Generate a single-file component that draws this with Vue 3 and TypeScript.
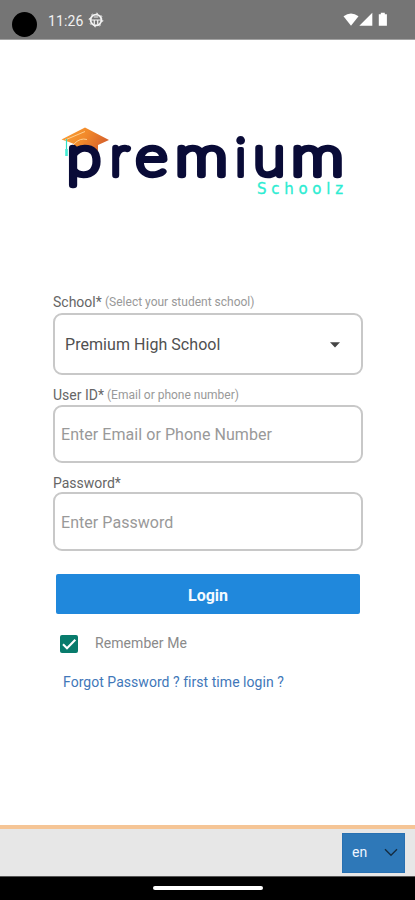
<script setup lang="ts">
import { ref } from 'vue'

const school = ref('Premium High School')
const userId = ref('')
const password = ref('')
const remember = ref(true)
const language = ref('en')
</script>

<template>
  <div class="screen">
    <header class="status">
      <span class="camera"></span>
      <span class="time">11:26</span>
      <svg class="globe" width="16" height="16" viewBox="0 0 16 16" fill="none" stroke="#f3f3f3">
        <circle cx="8" cy="8" r="5.4" stroke-width="1.8" />
        <circle cx="8" cy="8" r="6.8" stroke-width="1" stroke-dasharray="1.8 3.54" />
        <path d="M3 8h10M6.3 8v4.5M9.7 8v4.5M5.8 5h4.4" stroke-width="1.2" />
      </svg>
      <svg class="signals" width="48" height="16" viewBox="0 0 48 16" fill="#fff">
        <path d="M.5 4.2Q8 -1.3 15.5 4.2L8 13.7Z" />
        <path d="M29.3 .8V13.7H16.3Z" />
        <path d="M35.8 2.2h2V.8h4v1.4h2.1v11.6h-8.1Z" />
      </svg>
    </header>

    <main class="content">
      <svg class="logo" width="300" height="80" viewBox="55 120 300 80" role="img" aria-label="Premium Schoolz">
        <defs>
          <linearGradient id="cap" x1="0" y1="0" x2="1" y2="0.3">
            <stop offset="0" stop-color="#f9a23a" />
            <stop offset="0.55" stop-color="#f28a2b" />
            <stop offset="1" stop-color="#d9652b" />
          </linearGradient>
        </defs>
        <path d="M61.5 139.5L85 127.5L109 140L98 145V151H74V144L69 142Z" fill="url(#cap)" />
        <path d="M65 140L85 131.5M74 144Q80 137.5 87 139.5" fill="none" stroke="#ffd091" stroke-width="1" />
        <path d="M66.5 139V150" stroke="#2de0c5" stroke-width="1.2" />
        <path d="M66.5 149V156" stroke="#45edd5" stroke-width="2.6" />
        <circle cx="85.5" cy="162" r="12" fill="#fff" />
        <g class="word">
          <text transform="translate(67 175.2) scale(1.17 1.03)">p</text>
          <text transform="translate(110.5 175)">r</text>
          <text transform="translate(135.7 175) scale(1.15 1)">e</text>
          <text transform="translate(175.3 175) scale(1.25 1)">m</text>
          <text class="dotted" transform="translate(234.8 175.5)">i</text>
          <text transform="translate(253.8 175) scale(1.08 1)">u</text>
          <text transform="translate(291.2 175) scale(1.25 1)">m</text>
        </g>
        <text class="sub" x="257" y="194" textLength="86">Schoolz</text>
      </svg>

      <form class="form" @submit.prevent>
        <label class="caption first"><span class="name school">School*</span><span class="hint">(Select your student school)</span></label>
        <div class="field select">
          <span>{{ school }}</span>
          <svg width="10" height="6" viewBox="0 0 10 6"><path d="M0 .3h10L5 5.5Z" fill="#454545" /></svg>
        </div>
        <label class="caption second"><span class="name user">User ID*</span><span class="hint">(Email or phone number)</span></label>
        <input v-model="userId" class="field input" type="text" placeholder="Enter Email or Phone Number" />
        <label class="caption third"><span class="name pass">Password*</span></label>
        <input v-model="password" class="field input" type="password" placeholder="Enter Password" />
        <button class="login" type="submit">Login</button>
        <div class="remember" @click="remember = !remember">
          <span class="box">
            <svg v-if="remember" width="18" height="18" viewBox="0 0 18 18"><path d="M3 9.3L7 13.2L15.3 4.8" fill="none" stroke="#fff" stroke-width="2.1" /></svg>
          </span>
          <span class="remember-text">Remember Me</span>
        </div>
        <a class="forgot">Forgot Password ? first time login ?</a>
      </form>
    </main>

    <footer class="bottom">
      <div class="lang">
        <span>{{ language }}</span>
        <svg width="14" height="9" viewBox="0 0 14 9"><path d="M1 1.2L7 7.2L13 1.2" fill="none" stroke="#152d42" stroke-width="1.4" /></svg>
      </div>
    </footer>
    <div class="nav"><span class="handle"></span></div>
  </div>
</template>

<style>
body { background: #fff; }
</style>

<style scoped>
* { box-sizing: border-box; }
.screen { width: 415px; height: 900px; display: flex; flex-direction: column; background: #fff; font-family: Roboto, "Liberation Sans", sans-serif; overflow: hidden; }
.status { height: 40px; flex: none; display: flex; align-items: center; background: #757575; border-bottom: 1px solid #a2a2a2; padding: 0 24px 0 12px; }
.camera { width: 25px; height: 25px; border-radius: 50%; background: #000; margin-top: 9px; }
.time { margin-left: 11px; color: #f1f1f1; font-size: 14px; line-height: 18px; letter-spacing: .1px; margin-top: 2px; width: 37px; white-space: nowrap; }
.globe { margin-left: 3px; margin-top: 1px; }
.signals { margin-left: auto; margin-top: 1px; }
.content { flex: 1; min-height: 0; padding: 80px 52px 0 53px; }
.logo { display: block; margin-left: 2px; overflow: visible; }
.word { font-family: Lato, sans-serif; font-size: 53px; font-weight: 100; fill: #090b37; stroke: #090b37; stroke-width: 6.4px; stroke-linejoin: round; }
.dotted { font-weight: 300; stroke-width: 4px; }
.sub { font-family: "DejaVu Sans", sans-serif; font-size: 15px; fill: #2cecd2; stroke: #2cecd2; stroke-width: .3px; }
.form { display: flex; flex-direction: column; width: 310px; }
.caption { display: flex; align-items: center; height: 18px; white-space: nowrap; color: #666; font-size: 14px; line-height: 18px; }
.first { margin-top: 93px; }
.second { margin-top: 11px; }
.second + .input { margin-top: 1px; }
.third { margin-top: 11px; }
.hint { font-size: 12px; color: #999; padding-bottom: 1px; }
.school { width: 52px; }
.user { width: 54px; }
.field { width: 310px; border: 2px solid #c8c8c8; border-radius: 9px; background: #fff; font-family: inherit; }
.select { height: 62px; margin-top: 2px; display: flex; align-items: center; justify-content: space-between; padding: 1px 21px 0 10px; font-size: 16px; letter-spacing: .05px; color: #505050; }
.input { height: 58px; padding: 0 6px; font-size: 16px; letter-spacing: .05px; color: #444; outline: none; }
.third + .input { height: 59px; padding-top: 1px; }
.input::placeholder { color: #999; opacity: 1; }
.login { width: 304px; height: 40px; margin: 23px 0 0 3px; padding: 2px 0 0; border: 0; border-radius: 2px; background: #2088dc; color: #f4faff; font: 700 16px Roboto, sans-serif; }
.remember { display: flex; align-items: center; height: 18px; margin: 21px 0 0 7px; }
.box { width: 18px; height: 18px; border-radius: 2px; background: #087b6c; }
.box svg { display: block; }
.remember-text { margin-left: 17px; font-size: 14px; letter-spacing: .08px; color: #8a8a8a; padding-bottom: 2px; }
.forgot { margin: 20px 0 0 10px; font-size: 14px; line-height: 18px; letter-spacing: .04px; color: #4177b9; white-space: nowrap; }
.bottom { flex: none; height: 51px; display: flex; justify-content: flex-end; padding: 4px 10px 0 0; border-top: 4px solid #f5c596; background: #e7e7e7; }
.lang { width: 63px; height: 40px; display: flex; align-items: center; justify-content: space-between; padding: 0 6px 2px 9px; background: #2e78b8; border: 1px solid #2870b1; color: #eef6ff; font-size: 14px; }
.nav { flex: none; height: 24px; background: #000; border-top: 1px solid #555; display: flex; justify-content: center; padding-top: 9px; }
.handle { width: 110px; height: 4px; border-radius: 2px; background: #fff; }
</style>
